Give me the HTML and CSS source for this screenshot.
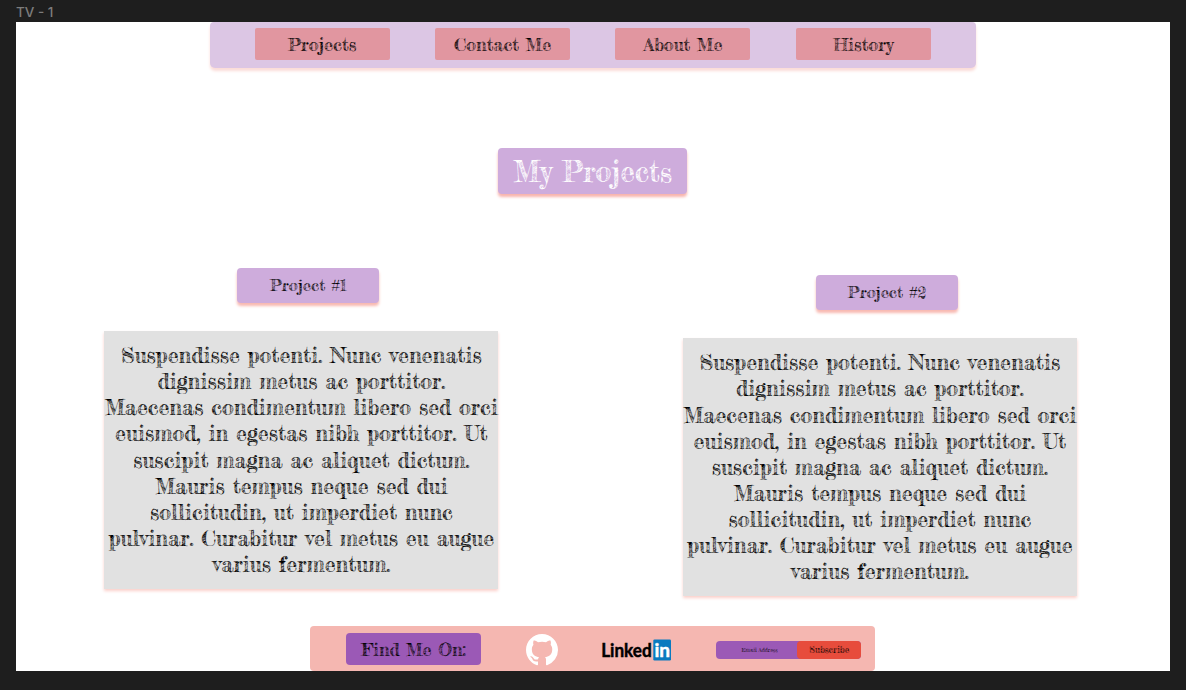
FILE: index.html
```html
<!DOCTYPE html>
<html lang="en">
<head>
<meta charset="utf-8">
<title>My Projects</title>
<link rel="stylesheet" href="styles.css">
</head>
<body>
<div class="frame-name">TV - 1</div>
<div class="page">
  <nav class="nav">
    <a class="nav-link">Projects</a>
    <a class="nav-link">Contact Me</a>
    <a class="nav-link">About Me</a>
    <a class="nav-link">History</a>
  </nav>
  <h1 class="title">My Projects</h1>
  <main class="projects">
    <section class="project">
      <h2 class="badge">Project #1</h2>
      <p class="card">
        <span class="line">Suspendisse potenti. Nunc venenatis</span>
        <span class="line">dignissim metus ac porttitor.</span>
        <span class="line">Maecenas condimentum libero sed orci</span>
        <span class="line">euismod, in egestas nibh porttitor. Ut</span>
        <span class="line">suscipit magna ac aliquet dictum.</span>
        <span class="line">Mauris tempus neque sed dui</span>
        <span class="line">sollicitudin, ut imperdiet nunc</span>
        <span class="line">pulvinar. Curabitur vel metus eu augue</span>
        <span class="line">varius fermentum.</span>
      </p>
    </section>
    <section class="project lower">
      <h2 class="badge">Project #2</h2>
      <p class="card">
        <span class="line">Suspendisse potenti. Nunc venenatis</span>
        <span class="line">dignissim metus ac porttitor.</span>
        <span class="line">Maecenas condimentum libero sed orci</span>
        <span class="line">euismod, in egestas nibh porttitor. Ut</span>
        <span class="line">suscipit magna ac aliquet dictum.</span>
        <span class="line">Mauris tempus neque sed dui</span>
        <span class="line">sollicitudin, ut imperdiet nunc</span>
        <span class="line">pulvinar. Curabitur vel metus eu augue</span>
        <span class="line">varius fermentum.</span>
      </p>
    </section>
  </main>
  <footer class="footer">
    <div class="find">Find Me On:</div>
    <svg class="github" viewBox="0 0 16 16"><path fill="#fff" d="M8 0C3.58 0 0 3.58 0 8c0 3.54 2.29 6.53 5.47 7.59.4.07.55-.17.55-.38 0-.19-.01-.82-.01-1.49-2.01.37-2.53-.49-2.69-.94-.09-.23-.48-.94-.82-1.13-.28-.15-.68-.52-.01-.53.63-.01 1.08.58 1.23.82.72 1.21 1.87.87 2.33.66.07-.52.28-.87.51-1.07-1.78-.2-3.64-.89-3.64-3.95 0-.87.31-1.59.82-2.15-.08-.2-.36-1.02.08-2.12 0 0 .67-.21 2.2.82.64-.18 1.32-.27 2-.27s1.36.09 2 .27c1.53-1.04 2.2-.82 2.2-.82.44 1.1.16 1.92.08 2.12.51.56.82 1.27.82 2.15 0 3.07-1.87 3.75-3.65 3.95.29.25.54.73.54 1.48 0 1.07-.01 1.93-.01 2.2 0 .21.15.46.55.38A8.01 8.01 0 0 0 16 8c0-4.42-3.58-8-8-8z"/></svg>
    <svg class="linkedin" viewBox="0 0 70 32">
      <text class="linked" x="-0.8" y="23" textLength="50.5" lengthAdjust="spacingAndGlyphs">Linked</text>
      <rect x="51.3" y="5.5" width="17.7" height="21" rx="1.2" fill="#0a7abf"/>
      <text class="linked in" x="52.4" y="23" textLength="15.6" lengthAdjust="spacingAndGlyphs">in</text>
    </svg>
    <form class="signup">
      <span class="email">Email Address</span>
      <span class="subscribe">Subscribe</span>
    </form>
  </footer>
</div>
</body>
</html>
```
FILE: styles.css
```css
* { box-sizing: border-box; }
body {
  margin: 0;
  height: 690px;
  padding: 0 16px;
  overflow: hidden;
  background: #1e1e1e;
  color: #000;
  font-family: "Fredericka the Great", "Liberation Serif", serif;
}
.frame-name {
  height: 22px;
  color: #7c7c7c;
  font: 500 13.5px/24px Inter, sans-serif;
}
.page {
  display: flex;
  flex-direction: column;
  align-items: center;
  width: 1153.5px;
  height: 648.5px;
  background: #fff;
}
.nav {
  display: flex;
  justify-content: space-between;
  width: 766px;
  height: 45.5px;
  padding: 6px 45px 0;
  border-radius: 4px 4px 5px 5px;
  background: #dcc6e4;
  box-shadow: 0 3px 3px #fbdcd8;
}
.nav-link {
  width: 135px;
  height: 32px;
  border-radius: 2px;
  background: #e196a0;
  font-size: 18px;
  line-height: 32px;
  text-align: center;
}
.title {
  width: 189px;
  height: 46px;
  margin: 80.5px 0 0;
  border-radius: 4px;
  background: #ceacdc;
  box-shadow: 0 3px 3px #f8b4ad;
  color: #fff;
  font-size: 28.9px;
  font-weight: 400;
  line-height: 47px;
  text-align: center;
}
.projects {
  display: flex;
  justify-content: space-between;
  width: 972.5px;
  height: 358px;
  margin-top: 74px;
  margin-left: -4.2px;
}
.project {
  display: flex;
  flex-direction: column;
  align-items: center;
  width: 394px;
}
.lower { padding-top: 7.3px; }
.badge {
  width: 142px;
  height: 35px;
  margin: 0 0 27.5px 14px;
  border-radius: 4px;
  background: #ceacdc;
  box-shadow: 0 3px 3px #f8b9b1;
  font-size: 16.4px;
  font-weight: 400;
  line-height: 35px;
  text-align: center;
}
.card {
  width: 394px;
  height: 258.5px;
  margin: 0;
  padding-top: 11.4px;
  background: #e1e1e1;
  box-shadow: 0 2px 3px #fbcfca;
  font-size: 21.65px;
  line-height: 26.15px;
  text-align: center;
}
.line { display: block; white-space: nowrap; }
.footer {
  display: flex;
  align-items: center;
  width: 565px;
  height: 44.5px;
  margin-top: auto;
  padding-left: 36px;
  border-radius: 4px;
  background: #f5b7b1;
}
.find {
  width: 135px;
  height: 32px;
  margin-top: 2px;
  border-radius: 4px;
  background: #9b59b6;
  font-size: 18px;
  line-height: 33px;
  text-align: center;
}
.github { width: 32px; height: 32px; margin: 3px 0 0 45px; }
.linkedin { width: 70px; height: 32px; margin: 3px 0 0 44px; overflow: visible; }
.linked {
  fill: #000;
  stroke: #000;
  stroke-width: 0.5px;
  font-family: Lato, sans-serif;
  font-size: 19.5px;
  font-weight: 700;
}
.in { fill: #fff; stroke: #fff; }
.signup {
  display: flex;
  width: 145.5px;
  height: 18px;
  margin: 3px 0 0 43.5px;
  border-radius: 4px;
  background: #9b59b6;
  text-align: center;
  line-height: 18px;
}
.email {
  width: 81.5px;
  padding-left: 6px;
  font-size: 5.4px;
}
.subscribe {
  width: 64px;
  border-radius: 4px;
  background: #e74c3c;
  font-size: 9px;
}
```
